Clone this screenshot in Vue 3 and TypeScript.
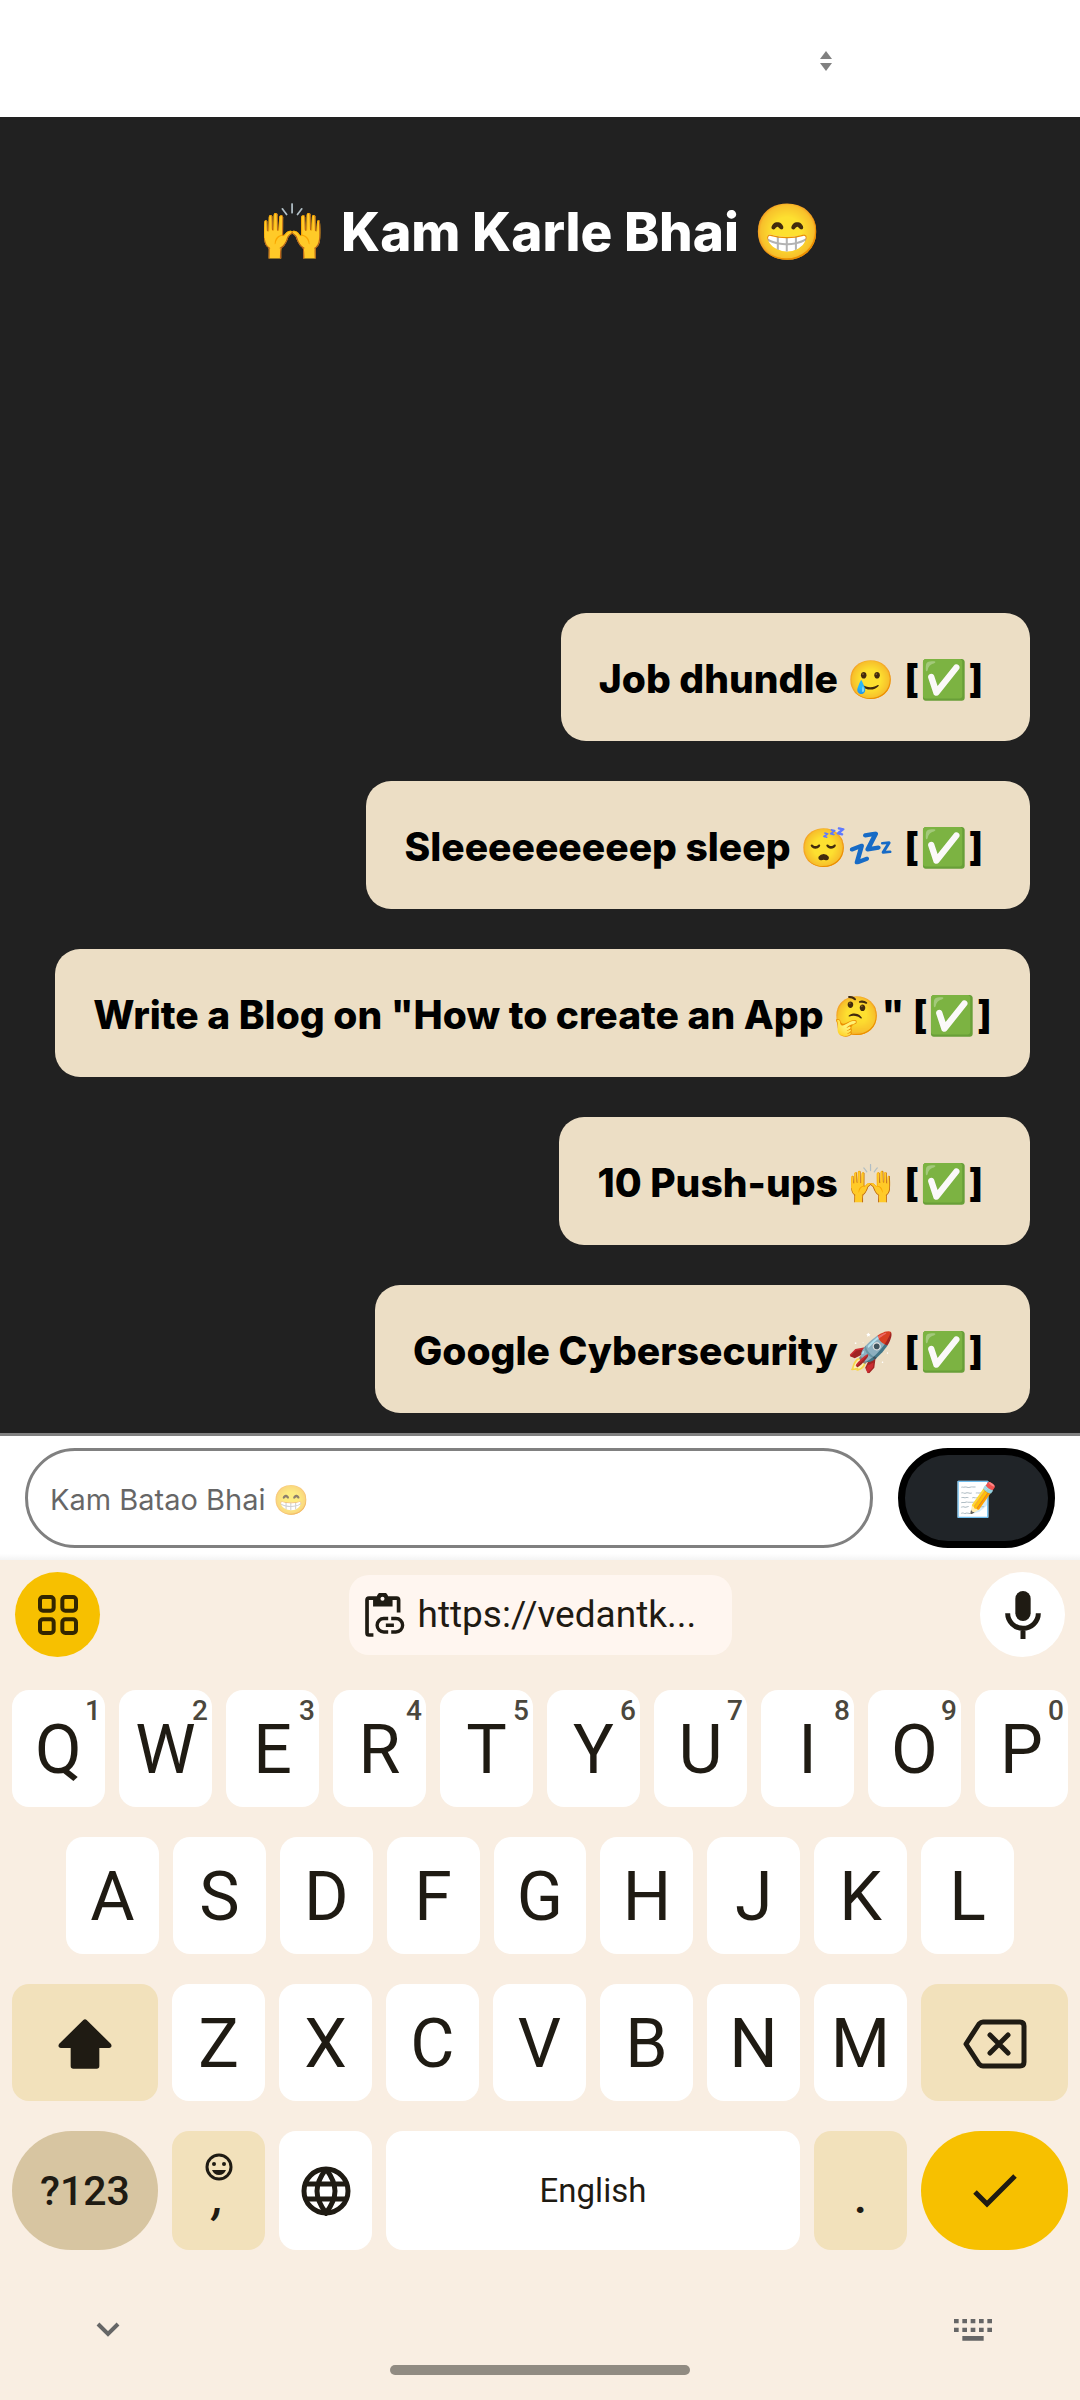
<script setup lang="ts">
import { ref } from 'vue'

interface Task {
  text: string
  emoji: string
  tail: string
  end: string
}

interface LetterKey {
  letter: string
  hint?: string
}

const tasks: Task[] = [
  { text: 'Job dhundle ', emoji: '🥲', tail: ' [', end: '] ' },
  { text: 'Sleeeeeeeeep sleep ', emoji: '😴💤', tail: ' [', end: '] ' },
  { text: 'Write a Blog on "How to create an App ', emoji: '🤔', tail: '" [', end: ']' },
  { text: '10 Push-ups ', emoji: '🙌', tail: ' [', end: '] ' },
  { text: 'Google Cybersecurity ', emoji: '🚀', tail: ' [', end: '] ' },
]

const topRow: LetterKey[] = 'QWERTYUIOP'.split('').map((letter, i) => ({
  letter,
  hint: String((i + 1) % 10),
}))
const homeRow = 'ASDFGHJKL'.split('')
const lowerRow = 'ZXCVBNM'.split('')

const draft = ref('')
</script>

<template>
  <div class="screen">
    <header class="header">
      <button class="sorter" type="button" aria-label="Switch list">
        <svg width="12" height="20" viewBox="0 0 12 20" fill="#808080">
          <path d="M6 0l6 8H0z" />
          <path d="M0 12h12l-6 8z" />
        </svg>
      </button>
    </header>

    <main class="main">
      <h1 class="title"><span class="emoji">🙌</span> Kam Karle Bhai <span class="emoji">😁</span></h1>
      <ul class="tasks">
        <li v-for="task in tasks" :key="task.text" class="task">{{ task.text }}<span class="emoji">{{ task.emoji }}</span>{{ task.tail }}<span class="emoji">✅</span>{{ task.end }}</li>
      </ul>
    </main>

    <form class="composer" @submit.prevent>
      <input v-model="draft" class="field" type="text" aria-label="New task" placeholder="Kam Batao Bhai 😁" />
      <button class="add" type="submit" aria-label="Add task">📝</button>
    </form>

    <section class="keyboard" aria-label="Keyboard">
      <div class="toolbar">
        <button class="round accent" type="button" aria-label="Menu">
          <svg width="40" height="40" viewBox="0 0 120 120" fill="none" stroke="#332600" stroke-width="12">
            <rect x="6" y="6" width="41" height="41" rx="9" />
            <rect x="73" y="6" width="41" height="41" rx="9" />
            <rect x="6" y="73" width="41" height="41" rx="9" />
            <rect x="73" y="73" width="41" height="41" rx="9" />
          </svg>
        </button>
        <button class="chip" type="button">
          <svg width="40" height="44" viewBox="0 0 119 131" fill="none" stroke="#1f1b13" stroke-width="11">
            <path d="M25 125H12q-6 0-6-6V21q0-6 6-6H94q6 0 6 6V58" />
            <path d="M24 12H35a17 15 0 0 1 34 0H82V40H24z" fill="#1f1b13" stroke="none" />
            <circle cx="52" cy="17" r="6" fill="#fff6f0" stroke="none" />
            <path d="M69 76H56a20 20 0 0 0 0 40H69M78 76H92a20 20 0 0 1 0 40H78M62 96H86" stroke-width="10" />
          </svg>
          <span>https://vedantk...</span>
        </button>
        <button class="round" type="button" aria-label="Voice typing">
          <svg width="36" height="48" viewBox="0 0 106 144">
            <rect x="30" y="0" width="46" height="90" rx="23" fill="#1f1b13" />
            <path d="M7 67a46 45 0 0 0 92 0M53 112V144" fill="none" stroke="#1f1b13" stroke-width="15" />
          </svg>
        </button>
      </div>

      <div class="rows">
        <div class="row">
          <button v-for="key in topRow" :key="key.letter" class="key" type="button">
            {{ key.letter }}<span class="hint">{{ key.hint }}</span>
          </button>
        </div>
        <div class="row inset">
          <button v-for="letter in homeRow" :key="letter" class="key" type="button">{{ letter }}</button>
        </div>
        <div class="row lower">
          <button class="key tinted" type="button" aria-label="Shift">
            <svg width="54" height="50" viewBox="0 0 162 150" fill="#1f1b13">
              <path d="M76 3q5-5 10 0L159 75q5 11-5 12H124V141q0 8-8 8H46q-8 0-8-8V87H8q-10-1-5-12z" />
            </svg>
          </button>
          <button v-for="letter in lowerRow" :key="letter" class="key" type="button">{{ letter }}</button>
          <button class="key tinted" type="button" aria-label="Backspace">
            <svg width="64" height="50" viewBox="0 0 64 50" fill="none" stroke="#1f1b13" stroke-width="5" stroke-linejoin="round">
              <path d="M3 25L16 5q2-2 4-2H57q4 0 4 4V43q0 4-4 4H20q-2 0-4-2z" />
              <path d="M27 16L45 34M45 16L27 34" stroke-linecap="round" />
            </svg>
          </button>
        </div>
        <div class="row bottom">
          <button class="key pill symbols" type="button">?123</button>
          <button class="key tinted punct" type="button" aria-label="Emoji and comma">
            <svg width="28" height="28" viewBox="0 0 28 28">
              <circle cx="14" cy="14" r="12" fill="none" stroke="#1f1b13" stroke-width="3" />
              <circle cx="9" cy="11" r="2" fill="#1f1b13" />
              <circle cx="19" cy="11" r="2" fill="#1f1b13" />
              <path d="M7 17H21q-2 5-7 5t-7-5z" fill="#1f1b13" />
            </svg>
            <span class="comma">,</span>
          </button>
          <button class="key" type="button" aria-label="Change language">
            <svg width="50" height="50" viewBox="-25 -25 50 50" fill="none" stroke="#1f1b13" stroke-width="5">
              <circle r="22" />
              <path d="M0-22Q-9-10-9 0T0 22Q9 10 9 0T0-22M-21-7H21M-21 8H21" />
            </svg>
          </button>
          <button class="key space" type="button">English</button>
          <button class="key tinted punct" type="button">.</button>
          <button class="key pill accent" type="button" aria-label="Enter">
            <svg width="44" height="34" viewBox="0 0 44 34" fill="none" stroke="#1f1b13" stroke-width="5">
              <path d="M2 18L14 30L42 2" />
            </svg>
          </button>
        </div>
      </div>

      <div class="nav">
        <button class="plain" type="button" aria-label="Hide keyboard">
          <svg width="24" height="16" viewBox="0 0 24 16" fill="none" stroke="#666" stroke-width="4">
            <path d="M2 2L12 12L22 2" />
          </svg>
        </button>
        <button class="plain" type="button" aria-label="Choose keyboard">
          <svg width="38" height="22" viewBox="0 0 114 66" fill="#666">
            <path d="M0 0h14v13H0zM25 0h14v13H25zM50 0h14v13H50zM75 0h14v13H75zM100 0h14v13H100zM0 26h14v13H0zM25 26h14v13H25zM50 26h14v13H50zM75 26h14v13H75zM100 26h14v13H100zM25 51h64v14H25z" />
          </svg>
        </button>
      </div>
      <div class="handle"></div>
    </section>
  </div>
</template>

<style>
body {
  margin: 0;
}
</style>

<style scoped>
.screen {
  display: flex;
  flex-direction: column;
  min-height: 100vh;
  background: #fff;
  font-family: Inter, 'Noto Color Emoji', sans-serif;
}

button {
  display: flex;
  align-items: center;
  justify-content: center;
  margin: 0;
  padding: 0;
  border: 0;
  background: none;
  color: #1f1b13;
  font: inherit;
}

svg {
  display: block;
  flex: none;
}

.header {
  display: flex;
  align-items: center;
  justify-content: flex-end;
  height: 117px;
  padding: 4px 248px 0 0;
  box-sizing: border-box;
}

.main {
  flex: 1;
  display: flex;
  flex-direction: column;
  justify-content: space-between;
  gap: 40px;
  padding: 83px 50px 20px;
  background: #212121;
}

.title {
  margin: 0;
  color: #fff;
  font-size: 53px;
  font-weight: 800;
  line-height: 64px;
  text-align: center;
}

.title .emoji {
  margin: 0 3px;
  font-size: 55px;
  line-height: 1;
}

.tasks {
  display: flex;
  flex-direction: column;
  align-items: flex-end;
  gap: 40px;
  margin: 0;
  padding: 0;
  list-style: none;
}

.task {
  padding: 40px 38px 36px;
  border-radius: 25px;
  background: #ecdec5;
  color: #000;
  font-size: 39px;
  font-weight: 800;
  line-height: 52px;
  white-space: pre;
}

.task .emoji {
  margin: 0 1px;
  font-size: 38px;
  line-height: 1;
}

.composer {
  display: flex;
  gap: 25px;
  padding: 12px 25px;
  border-top: 3px solid #808080;
  background: linear-gradient(#fff 95%, #f4f4f4);
}

.field {
  flex: 1;
  min-width: 0;
  height: 100px;
  padding: 2px 22px 0;
  border: 3px solid #808080;
  border-radius: 50px;
  box-sizing: border-box;
  background: #fff;
  color: #000;
  font: inherit;
  font-size: 29px;
}

.field::placeholder {
  color: #000;
  opacity: 0.6;
}

.add {
  width: 157px;
  height: 100px;
  border: 7px solid #000;
  border-radius: 50px;
  background: #202428;
  font-size: 34px;
}

.keyboard {
  display: flex;
  flex-direction: column;
  padding: 12px 0 25px;
  background: #f9eee2;
  font-family: Roboto, sans-serif;
}

.toolbar {
  display: flex;
  align-items: center;
  justify-content: space-between;
  padding: 0 15px;
}

.round {
  width: 85px;
  height: 85px;
  border-radius: 50%;
  background: #fff;
}

.chip {
  gap: 13px;
  width: 383px;
  height: 80px;
  padding: 0 16px;
  border-radius: 20px;
  background: #fff6f0;
  justify-content: flex-start;
  font-size: 37px;
}

.rows {
  display: flex;
  flex-direction: column;
  gap: 30px;
  margin-top: 33px;
  padding: 0 12px;
}

.row {
  display: grid;
  grid-template-columns: repeat(10, 1fr);
  gap: 14px;
}

.inset {
  grid-template-columns: repeat(9, 1fr);
  padding: 0 54px;
}

.lower {
  grid-template-columns: 146fr repeat(7, 93fr) 147fr;
}

.bottom {
  grid-template-columns: 146fr 93fr 93fr 414fr 93fr 147fr;
}

.key {
  position: relative;
  height: 117px;
  padding-top: 2px;
  border-radius: 17px;
  background: #fff;
  font-size: 68px;
}

.bottom .key {
  height: 119px;
  padding-top: 0;
}

.hint {
  position: absolute;
  top: 7px;
  right: 4px;
  color: #4b473d;
  font-size: 28px;
  font-weight: 500;
  line-height: 28px;
}

.tinted {
  background: #f2e1bb;
}

.pill {
  border-radius: 60px;
}

.symbols {
  background: #d7c5a1;
  font-size: 41px;
  font-weight: 500;
}

.punct {
  flex-direction: column;
  justify-content: flex-end;
  padding-bottom: 37px;
  font-size: 48px;
  font-weight: 500;
  line-height: 32px;
}

.comma {
  font-style: italic;
}

.bottom .space {
  font-size: 33px;
}

.accent {
  background: #f7c000;
}

.nav {
  display: flex;
  align-items: center;
  justify-content: space-between;
  height: 40px;
  margin-top: 60px;
  padding: 0 88px 0 96px;
}

.handle {
  align-self: center;
  width: 300px;
  height: 10px;
  margin-top: 15px;
  border-radius: 5px;
  background: #918b82;
}
</style>
